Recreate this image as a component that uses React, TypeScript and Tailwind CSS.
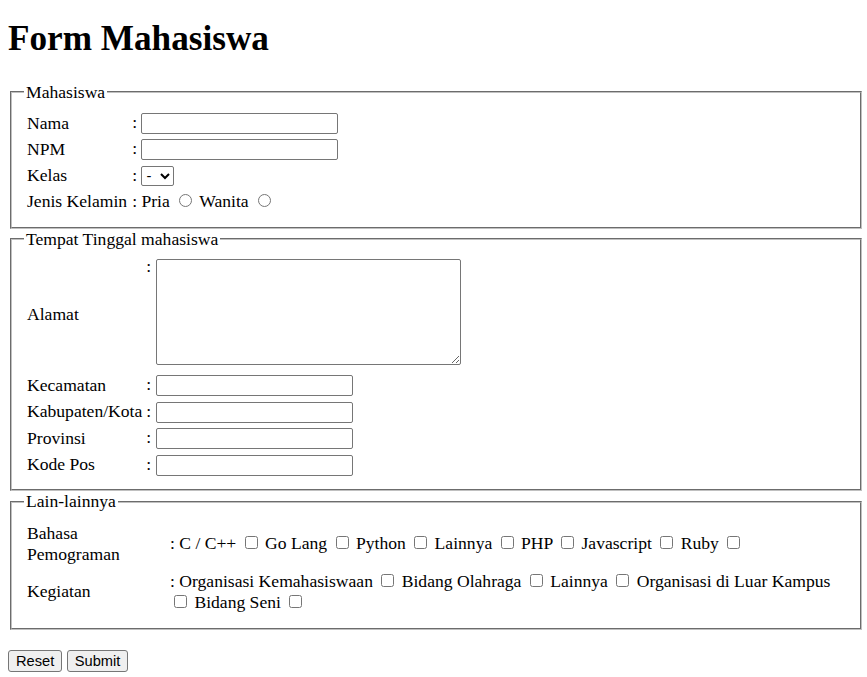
import React from "react";

const fsBase =
  "mx-[2px] w-[852px] [border-style:groove] border-2 border-[rgb(192,192,192)] pt-[6.6px] px-[12px] min-w-0";
const lg = "px-[2px]";
const inp =
  "w-[197px] border border-[#767676] rounded-[2px] bg-white px-[3px] py-[2px] font-['Liberation_Sans',Arial,sans-serif] text-[13.33px] leading-[normal] align-baseline";
const cb = "m-[3px_3px_3px_4px] align-baseline";
const rd = "m-[3px_3px_0_5px] align-baseline";
const td = "p-px align-middle";
const td1 = "py-px pl-px pr-[2px] align-middle";
const td3 = "px-px py-[2px] align-middle";
const btn =
  "bg-[#efefef] border border-[#767676] rounded-[3px] px-[7px] py-[2px] font-['Liberation_Sans',Arial,sans-serif] text-[14.67px] leading-[normal] text-black";

export default function App() {
  return (
    <div className="w-[867px] h-[677px] overflow-hidden bg-white">
      <div className="w-[872px] px-[8px] flow-root font-['Liberation_Serif','Times_New_Roman',serif] text-[17.6px] leading-[normal] text-black">
        <h1 className="text-[35.2px] font-bold leading-[normal] mt-[19px] mb-[22.5px]">
          Form Mahasiswa
        </h1>
        <form>
          <fieldset className={fsBase + " pb-[11.5px]"}>
            <legend className={lg}>Mahasiswa</legend>
            <table className="border-separate border-spacing-[2px]">
              <tbody>
                <tr className="h-[24px]">
                  <td className={td1}>Nama</td>
                  <td className={td}>
                    : <input type="text" className={inp} />
                  </td>
                </tr>
                <tr className="h-[24px]">
                  <td className={td1}>NPM</td>
                  <td className={td}>
                    : <input type="text" className={inp} />
                  </td>
                </tr>
                <tr className="h-[24px]">
                  <td className={td1}>Kelas</td>
                  <td className={td}>
                    :{" "}
                    <select className="w-[33px] h-[20px] border border-[#767676] rounded-[2px] bg-white font-['Liberation_Sans',Arial,sans-serif] text-[14.67px] leading-[normal] align-baseline">
                      <option>-</option>
                    </select>
                  </td>
                </tr>
                <tr className="h-[24px]">
                  <td className={td1}>Jenis Kelamin</td>
                  <td className={td}>
                    : Pria <input type="radio" name="jk" className={rd} /> Wanita{" "}
                    <input type="radio" name="jk" className={rd} />
                  </td>
                </tr>
              </tbody>
            </table>
          </fieldset>

          <fieldset className={fsBase + " pb-[10px]"}>
            <legend className={lg}>Tempat Tinggal mahasiswa</legend>
            <table className="border-separate border-spacing-[2px]">
              <tbody>
                <tr>
                  <td className={td}>Alamat</td>
                  <td className={td}>
                    <span className="inline-block align-top leading-[15px]">:</span>{" "}
                    <textarea className="w-[305px] h-[106px] border border-[#767676] rounded-[2px] bg-white p-[3px] font-['Liberation_Mono',monospace] text-[13.33px] leading-[normal] align-baseline resize"></textarea>
                  </td>
                </tr>
                {["Kecamatan", "Kabupaten/Kota", "Provinsi", "Kode Pos"].map((l) => (
                  <tr key={l} className="h-[24.5px]">
                    <td className={td}>{l}</td>
                    <td className={td}>
                      : <input type="text" className={inp} />
                    </td>
                  </tr>
                ))}
              </tbody>
            </table>
          </fieldset>

          <fieldset className={fsBase + " pb-[11px]"}>
            <legend className={lg}>Lain-lainnya</legend>
            <table className="w-full border-separate border-spacing-[2px]">
              <tbody>
                <tr>
                  <td className={td3 + " w-[141px]"}>Bahasa Pemograman</td>
                  <td className={td3}>
                    : C / C++ <input type="checkbox" className={cb} /> Go Lang{" "}
                    <input type="checkbox" className={cb} /> Python{" "}
                    <input type="checkbox" className={cb} /> Lainnya{" "}
                    <input type="checkbox" className={cb} /> PHP{" "}
                    <input type="checkbox" className={cb} /> Javascript{" "}
                    <input type="checkbox" className={cb} /> Ruby{" "}
                    <input type="checkbox" className={cb} />
                  </td>
                </tr>
                <tr>
                  <td className={td3}>Kegiatan</td>
                  <td className={td3}>
                    : Organisasi Kemahasiswaan <input type="checkbox" className={cb} /> Bidang
                    Olahraga <input type="checkbox" className={cb} /> Lainnya{" "}
                    <input type="checkbox" className={cb} /> Organisasi di Luar Kampus{" "}
                    <input type="checkbox" className={cb} /> Bidang Seni{" "}
                    <input type="checkbox" className={cb} />
                  </td>
                </tr>
              </tbody>
            </table>
          </fieldset>
          <div className="mt-[20px]">
            <button type="reset" className={btn}>
              Reset
            </button>{" "}
            <button type="submit" className={btn}>
              Submit
            </button>
          </div>
        </form>
      </div>
    </div>
  );
}
